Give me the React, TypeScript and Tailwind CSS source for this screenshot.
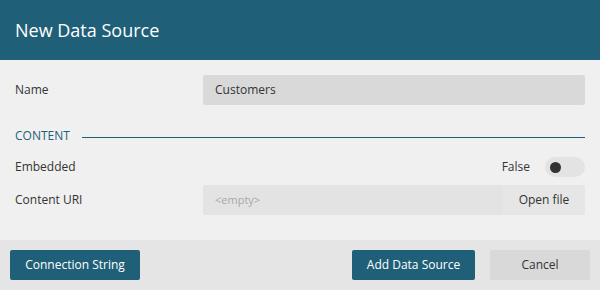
import React from "react";

export default function App() {
  return (
    <div className="w-[600px] h-[290px] flex flex-col bg-[#f0f0f0] text-[#333] text-[12px]" style={{ fontFamily: '"Open Sans", "Noto Sans", sans-serif' }}>
      <div className="h-[60px] bg-[#1f5f78] flex items-center px-[15px] shrink-0">
        <span className="text-white text-[18px] font-medium">New Data Source</span>
      </div>
      <div className="flex-1 flex flex-col px-[15px] pt-[15px]">
        <div className="flex items-center h-[30px]">
          <span className="w-[188px]">Name</span>
          <div className="flex-1 h-[30px] bg-[#d9d9d9] rounded-[2px] flex items-center px-[12px]">Customers</div>
        </div>
        <div className="flex items-center mt-[16px] h-[30px]">
          <span className="text-[#1f5f78]">CONTENT</span>
          <div className="flex-1 h-px bg-[#1f5f78] ml-[12px] mt-[2px]" />
        </div>
        <div className="flex items-center h-[20px] mt-[6px]">
          <span className="flex-1">Embedded</span>
          <span className="mr-[15px]">False</span>
          <div className="w-[40px] h-[20px] rounded-full bg-[#e3e3e3] flex items-center pl-[5px]">
            <div className="w-[11px] h-[11px] rounded-full bg-[#333]" />
          </div>
        </div>
        <div className="flex items-center h-[30px] mt-[8px]">
          <span className="w-[188px]">Content URI</span>
          <div className="flex-1 h-[30px] flex rounded-[2px] overflow-hidden">
            <div className="flex-1 bg-[#e3e3e3] flex items-center px-[12px] text-[#a8a8a8] text-[11px]">&lt;empty&gt;</div>
            <div className="w-[82px] bg-[#e6e6e6] flex items-center justify-center">Open file</div>
          </div>
        </div>
      </div>
      <div className="h-[50px] bg-[#e5e5e5] flex items-center px-[10px] shrink-0">
        <button className="h-[30px] bg-[#1f5f78] text-white rounded-[2px] w-[130px] whitespace-nowrap">Connection String</button>
        <div className="flex-1" />
        <button className="h-[30px] bg-[#1f5f78] text-white rounded-[2px] w-[123px] whitespace-nowrap">Add Data Source</button>
        <button className="h-[30px] bg-[#d9d9d9] text-[#333] rounded-[2px] w-[100px] ml-[15px]">Cancel</button>
      </div>
    </div>
  );
}
